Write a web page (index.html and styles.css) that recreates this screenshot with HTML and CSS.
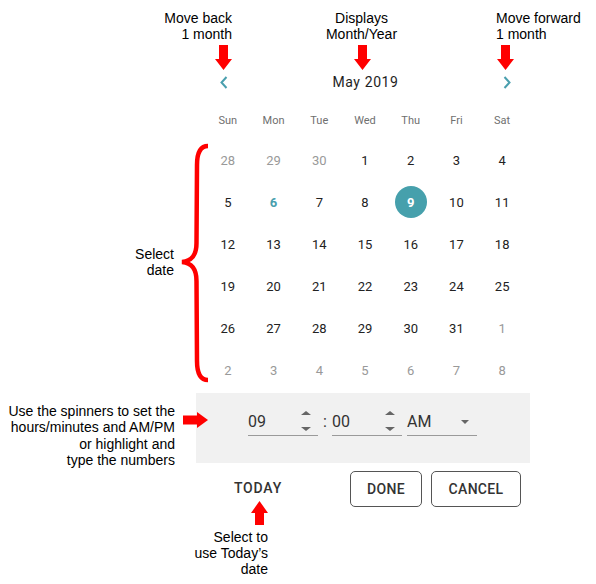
FILE: index.html
```html
<!DOCTYPE html>
<html lang="en">
<head>
<meta charset="utf-8">
<title>Date picker guide</title>
<link rel="stylesheet" href="styles.css">
</head>
<body>
<div class="page">
  <div class="note note-back">Move back<br>1 month</div>
  <div class="note note-display">Displays<br>Month/Year</div>
  <div class="note note-forward">Move forward<br>1 month</div>
  <svg class="arrow arrow-down arrow-back" width="17" height="25" viewBox="0 0 17 25"><polygon points="4,0 13,0 13,14 17,14 8.5,25 0,14 4,14" fill="#ff0000"/></svg>
  <svg class="arrow arrow-down arrow-display" width="17" height="25" viewBox="0 0 17 25"><polygon points="4,0 13,0 13,14 17,14 8.5,25 0,14 4,14" fill="#ff0000"/></svg>
  <svg class="arrow arrow-down arrow-forward" width="17" height="25" viewBox="0 0 17 25"><polygon points="4,0 13,0 13,14 17,14 8.5,25 0,14 4,14" fill="#ff0000"/></svg>

  <div class="note note-select">Select<br>date</div>
  <svg class="brace" width="32" height="240" viewBox="0 0 32 240"><path d="M30,3 C22,3 19,10 19,22 L18.5,100 C18.5,112 14,118 4,119 C14,120 18.5,126 18.5,138 L19,218 C19,230 22,237 30,237" fill="none" stroke="#ff0000" stroke-width="4.5"/></svg>

  <div class="note note-spin">Use the spinners to set the<br>hours/minutes and AM/PM<br>or highlight and<br>type the numbers</div>
  <svg class="arrow arrow-right" width="25" height="16" viewBox="0 0 25 16"><polygon points="0,3.5 14,3.5 14,0 25,8 14,16 14,12.5 0,12.5" fill="#ff0000"/></svg>

  <svg class="arrow arrow-up" width="17" height="24" viewBox="0 0 17 24"><polygon points="8.5,0 17,12 13,12 13,24 4,24 4,12 0,12" fill="#ff0000"/></svg>
  <div class="note note-today">Select to<br>use Today’s<br>date</div>

  <div class="picker">
    <div class="header">
      <button class="nav"><svg width="10" height="13" viewBox="0 0 10 13"><polyline points="7.5,1 2.5,6.5 7.5,12" fill="none" stroke="#4a9fae" stroke-width="2"/></svg></button>
      <div class="month">May 2019</div>
      <button class="nav"><svg width="10" height="13" viewBox="0 0 10 13"><polyline points="2.5,1 7.5,6.5 2.5,12" fill="none" stroke="#4a9fae" stroke-width="2"/></svg></button>
    </div>
    <div class="daynames">
      <span>Sun</span><span>Mon</span><span>Tue</span><span>Wed</span><span>Thu</span><span>Fri</span><span>Sat</span>
    </div>
    <div class="days">
      <span class="day other">28</span><span class="day other">29</span><span class="day other">30</span><span class="day">1</span><span class="day">2</span><span class="day">3</span><span class="day">4</span>
      <span class="day">5</span><span class="day today">6</span><span class="day">7</span><span class="day">8</span><span class="day selected"><b>9</b></span><span class="day">10</span><span class="day">11</span>
      <span class="day">12</span><span class="day">13</span><span class="day">14</span><span class="day">15</span><span class="day">16</span><span class="day">17</span><span class="day">18</span>
      <span class="day">19</span><span class="day">20</span><span class="day">21</span><span class="day">22</span><span class="day">23</span><span class="day">24</span><span class="day">25</span>
      <span class="day">26</span><span class="day">27</span><span class="day">28</span><span class="day">29</span><span class="day">30</span><span class="day">31</span><span class="day other">1</span>
      <span class="day other">2</span><span class="day other">3</span><span class="day other">4</span><span class="day other">5</span><span class="day other">6</span><span class="day other">7</span><span class="day other">8</span>
    </div>
    <div class="time">
      <div class="field">
        <span class="value">09</span>
        <span class="spinner"><i class="up"></i><i class="down"></i></span>
      </div>
      <span class="colon">:</span>
      <div class="field">
        <span class="value">00</span>
        <span class="spinner"><i class="up"></i><i class="down"></i></span>
      </div>
      <div class="field ampm">
        <span class="value">AM</span>
        <i class="caret"></i>
      </div>
    </div>
    <div class="actions">
      <button class="btn text">TODAY</button>
      <button class="btn outline done">DONE</button>
      <button class="btn outline cancel">CANCEL</button>
    </div>
  </div>
</div>
</body>
</html>
```
FILE: styles.css
```css
html, body {
  margin: 0;
  padding: 0;
  background: #ffffff;
}

.page {
  position: relative;
  width: 596px;
  height: 584px;
  overflow: hidden;
}

/* ---------- annotations ---------- */
.note {
  position: absolute;
  font-family: "Liberation Sans", Arial, sans-serif;
  font-size: 14px;
  line-height: 16px;
  color: #000;
  white-space: nowrap;
}
.note-back { right: 364px; top: 9.5px; text-align: right; }
.note-display { left: 311px; width: 101px; top: 9.5px; text-align: center; }
.note-forward { left: 496px; top: 9.5px; text-align: left; }
.note-select { right: 422px; top: 246px; text-align: right; }
.note-spin { right: 421px; top: 403px; text-align: right; line-height: 16.33px; }
.note-today { right: 328px; top: 529px; text-align: right; }

.arrow, .brace {
  position: absolute;
  display: block;
}
.arrow-down { top: 45px; }
.arrow-back { left: 215px; }
.arrow-display { left: 354px; }
.arrow-forward { left: 497px; }
.arrow-right { left: 183px; top: 412px; }
.arrow-up { left: 251px; top: 501px; }
.brace { left: 178px; top: 143px; }

/* ---------- picker ---------- */
.picker {
  margin-left: 196px;
  padding-top: 66px;
  width: 334px;
  font-family: Roboto, "Noto Sans", sans-serif;
  color: #222;
}

.header {
  display: flex;
  align-items: center;
  height: 32px;
  padding: 0 11px 0 16px;
}
.nav {
  width: 24px;
  height: 32px;
  padding: 0;
  border: 0;
  background: transparent;
  display: flex;
  align-items: center;
  justify-content: center;
}
.nav svg { display: block; }
.month {
  flex: 1;
  text-align: center;
  font-size: 14px;
  font-weight: 400;
  letter-spacing: 0.6px;
  color: #1e1e1e;
}

.daynames {
  margin-top: 12px;
  margin-left: 9px;
  width: 320px;
  height: 22px;
  display: grid;
  grid-template-columns: repeat(7, 1fr);
  font-size: 11px;
  font-weight: 400;
  line-height: 22px;
  color: #6f6f6f;
  text-align: center;
}

.days {
  margin-top: 7px;
  margin-left: 9px;
  width: 320px;
  display: grid;
  grid-template-columns: repeat(7, 1fr);
  grid-auto-rows: 42px;
  font-size: 13px;
}
.day {
  display: flex;
  align-items: center;
  justify-content: center;
  color: #222;
}
.day.other { color: #999; }
.day.today { color: #4a9fae; font-weight: 700; }
.day.selected b {
  width: 32px;
  height: 32px;
  border-radius: 50%;
  background: #46a0ac;
  color: #fff;
  font-weight: 700;
  display: flex;
  align-items: center;
  justify-content: center;
}

.time {
  margin-top: 2px;
  height: 70px;
  box-sizing: border-box;
  padding: 17px 0 0 52px;
  background: #f1f1f1;
  display: flex;
  align-items: flex-start;
  font-size: 16px;
  color: #333;
}
.field {
  width: 70px;
  height: 26px;
  box-sizing: border-box;
  padding-bottom: 2px;
  border-bottom: 1px solid #9a9a9a;
  display: flex;
}
.field .value {
  line-height: 23px;
}
.spinner {
  margin-left: auto;
  margin-right: 7px;
  margin-top: 1px;
  display: flex;
  flex-direction: column;
  gap: 11.5px;
}
.spinner i {
  display: block;
  width: 0;
  height: 0;
  border-left: 5px solid transparent;
  border-right: 5px solid transparent;
}
.spinner .up { border-bottom: 4.5px solid #666; }
.spinner .down { border-top: 4.5px solid #666; }
.colon {
  width: 14px;
  text-align: center;
  line-height: 23px;
}
.ampm { margin-left: 5px; }
.caret {
  display: block;
  margin-left: auto;
  margin-right: 8px;
  align-self: center;
  width: 0;
  height: 0;
  border-left: 4.5px solid transparent;
  border-right: 4.5px solid transparent;
  border-top: 4px solid #666;
}

.actions {
  margin-top: 8px;
  display: flex;
  align-items: center;
  padding-left: 17px;
}
.btn {
  height: 36px;
  box-sizing: border-box;
  padding: 0;
  font-family: Roboto, "Noto Sans", sans-serif;
  font-size: 14px;
  font-weight: 500;
  letter-spacing: 0.3px;
  color: #333;
  background: transparent;
}
.btn.text {
  width: 90px;
  border: 0;
  letter-spacing: 0.8px;
  margin-top: -2px;
}
.btn.outline {
  border: 1px solid #555;
  border-radius: 5px;
  background: #fff;
}
.btn.done { width: 72px; margin-left: 47px; }
.btn.cancel { width: 90px; margin-left: 9px; }
```
